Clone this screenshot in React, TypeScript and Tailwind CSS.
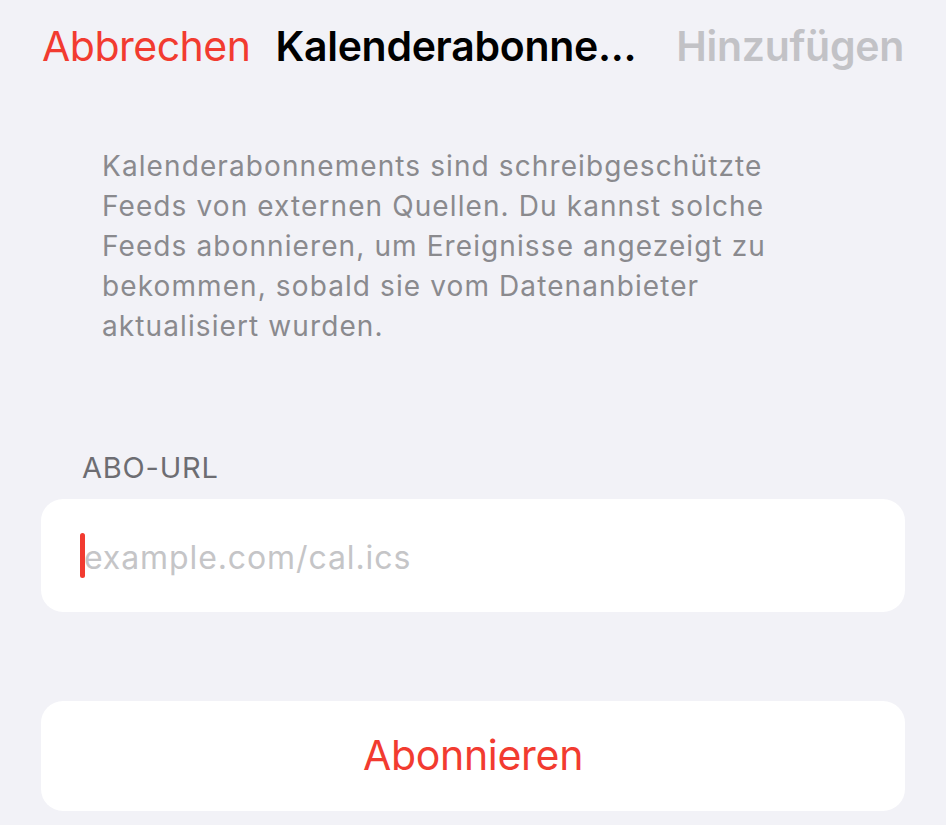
import React from 'react';

const lines = [
    'Kalenderabonnements sind schreibgeschützte',
    'Feeds von externen Quellen. Du kannst solche',
    'Feeds abonnieren, um Ereignisse angezeigt zu',
    'bekommen, sobald sie vom Datenanbieter',
    'aktualisiert wurden.',
];

const App: React.FC = () => {
    return (
        <div className="w-[946px] h-[825px] overflow-hidden bg-[#f2f2f7] font-['Inter','Liberation_Sans',sans-serif]">
            {/* nav bar */}
            <div className="flex items-center pl-[42px] pr-[42px] pt-[22px] h-[70px]">
                <span className="text-[41px] leading-[48px] text-[#f23b30] tracking-[-0.5px]">Abbrechen</span>
                <span className="ml-[25px] text-[41px] leading-[48px] font-semibold text-black tracking-[-0.3px]">Kalenderabonne...</span>
                <span className="ml-auto text-[41px] leading-[48px] font-semibold text-[#c2c2c6] tracking-[-0.3px]">Hinzufügen</span>
            </div>

            {/* footer text */}
            <div className="pl-[102px] pt-[76px] text-[28px] leading-[40px] tracking-[1.1px] text-[#8a8a8e]">
                {lines.map(l => (
                    <div key={l} className="whitespace-nowrap">{l}</div>
                ))}
            </div>

            {/* section */}
            <div className="px-[41px] pt-[105px]">
                <div className="pl-[41px] text-[29px] leading-[34px] tracking-[0.8px] text-[#6d6d72]">ABO-URL</div>
                <div className="mt-[14px] h-[113px] bg-white rounded-[22px] flex items-center pl-[39px]">
                    <span className="w-[5px] h-[45px] rounded-full bg-[#f23b30]" />
                    <span className="mt-[4px] text-[32px] tracking-[0.9px] text-[#c5c5c7] -ml-[1px]">example.com/cal.ics</span>
                </div>

                <div className="mt-[89px] h-[110px] bg-white rounded-[22px] flex items-center justify-center">
                    <span className="text-[41px] text-[#f23b30] tracking-[-0.3px]">Abonnieren</span>
                </div>
            </div>
        </div>
    );
};

export default App;
